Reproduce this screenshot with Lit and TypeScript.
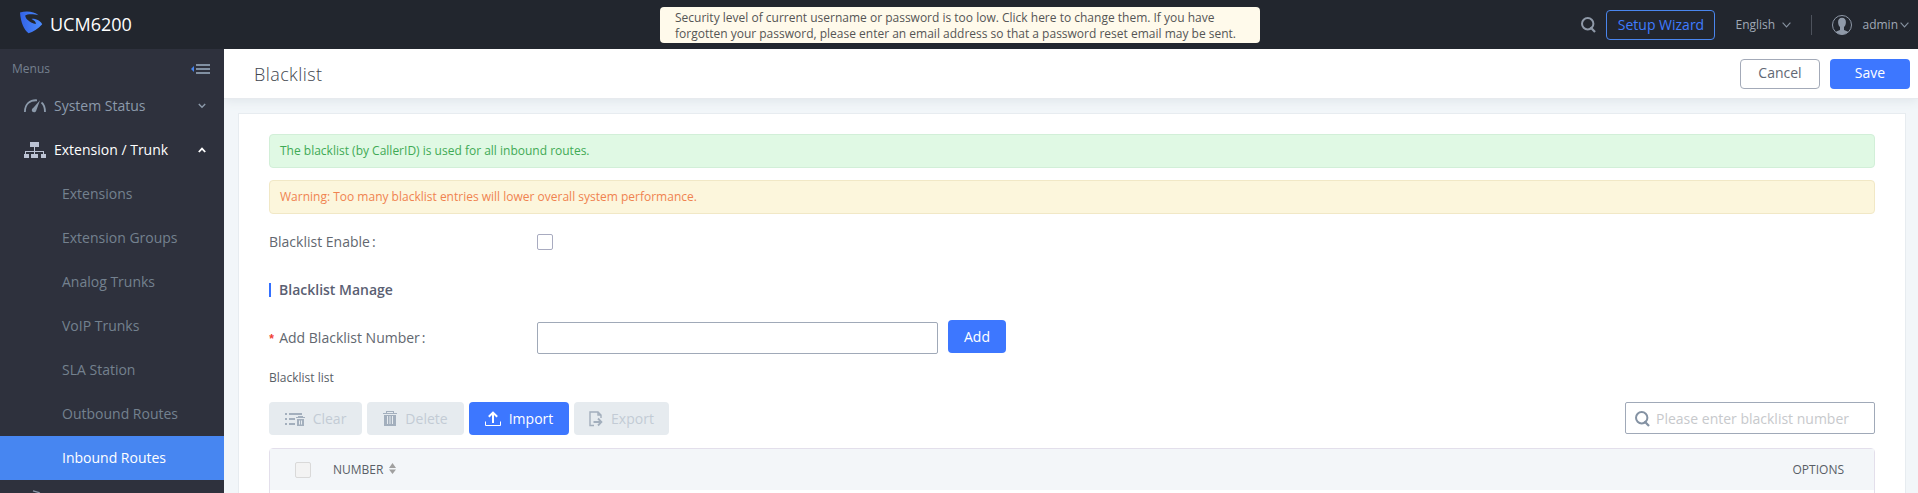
import { LitElement, html, css, svg } from "lit";
import { customElement } from "lit/decorators.js";

const searchIcon = svg`<svg width="15" height="16" viewBox="0 0 15 16" fill="none" stroke="currentColor"><circle cx="6.7" cy="6.7" r="5.7" stroke-width="2"/><path d="M9.4 10.2L14 15" stroke-width="2.2"/></svg>`;
const chevron = svg`<svg width="9" height="6" viewBox="0 0 9 6" fill="none" stroke="currentColor" stroke-width="1.1"><path d="M.6 .6L4.5 4.9L8.4 .6"/></svg>`;

@customElement("app-root")
export class AppRoot extends LitElement {
  static styles = css`
    :host { display: block; height: 493px; overflow: hidden; font: 14px/20px "Open Sans", sans-serif; color: #595e66; background: #f2f6f9; }
    * { box-sizing: border-box; }
    svg { display: block; flex: none; }
    .top { height: 49px; background: #22262e; display: flex; align-items: center; justify-content: space-between; color: #a0a9b6; position: relative; }
    .brand { display: flex; align-items: center; padding: 0 0 5px 20px; gap: 7px; color: #fff; font-size: 18px; }
    .brand span { padding-top: 3px; }
    .notice { position: absolute; left: 660px; top: 7px; width: 600px; height: 36px; border-radius: 4px; background: #fffaeb; color: #555; font-size: 12px; line-height: 16px; padding: 3px 0 0 15px; white-space: nowrap; }
    .notice div { width: max-content; }
    .tools { display: flex; align-items: center; padding-right: 9px; height: 46px; font-size: 12px; }
    .tools > svg:first-child { color: #8f99a8; }
    .wizard { width: 109px; height: 30px; border: 1px solid #4a86ee; border-radius: 4px; color: #3f7cff; font-size: 14px; line-height: 27px; text-align: center; margin: 0 20px 0 10px; }
    .lang { display: flex; align-items: center; gap: 7px; width: 76px; }
    .sep { width: 1px; height: 20px; background: #4d525c; margin-right: 20px; }
    .admin { display: flex; align-items: center; gap: 2px; margin-left: 10px; }
    .lang svg, .admin svg { color: #8792a0; }
    .body { display: flex; height: 444px; }
    .side { width: 224px; background: #2e313d; color: #8190a2; overflow: hidden; flex: none; }
    .menus { height: 35px; display: flex; align-items: center; justify-content: space-between; padding: 5px 14px 0 12px; font-size: 12px; color: #75808f; }
    .row { height: 44px; display: flex; align-items: center; padding: 0 18px 0 24px; color: #8c9aab; }
    .row span { flex: 1; padding-left: 8px; }
    .row.on { color: #fff; }
    .row.on .ic { color: #bcc3d4; }
    .sub { height: 44px; line-height: 44px; padding-left: 62px; color: #74818f; }
    .sub.on { background: #4786f1; color: #fff; }
    .main { flex: 1; min-width: 0; overflow: hidden; }
    .title { height: 50px; background: #fff; border-bottom: 1px solid #e7eaee; box-shadow: 0 2px 10px #dfe5ea; display: flex; align-items: center; padding: 1px 8px 0 30px; gap: 10px; }
    .title h1 { flex: 1; margin: 0; font-size: 18px; font-weight: 300; line-height: 24px; letter-spacing: .42px; color: #41464e; }
    .btn { height: 33px; border-radius: 4px; display: flex; align-items: center; justify-content: center; background: #3d77ff; color: #fff; }
    .title .btn { width: 80px; height: 30px; margin-top: -1px; padding-bottom: 1px; }
    .title .cancel { background: #fff; border: 1px solid #a3aab8; color: #626774; }
    .card { margin: 14px 12px 0 14px; height: 400px; background: #fff; border: 1px solid #e7ecf0; padding: 20px 30px 0; }
    .alert { height: 34px; border: 1px solid #d2efd8; border-radius: 4px; background: #e0f9e4; color: #3faa55; font-size: 12px; line-height: 32px; padding-left: 10px; margin-bottom: 12px; }
    .warn { background: #fcf6dc; border-color: #f1e8c6; color: #f08350; }
    .field { display: flex; align-items: center; }
    .label { width: 268px; color: #62676f; }
    .colon { padding-left: 2px; }
    .enable { height: 32px; }
    .box { width: 16px; height: 16px; border: 1px solid #a8abc0; border-radius: 2px; background: #fff; }
    .manage { display: flex; align-items: center; height: 20px; margin-top: 22px; gap: 8px; font-weight: 600; color: #5a6072; }
    .manage::before { content: ""; width: 2px; height: 14px; background: #3370ff; }
    .number { margin-top: 20px; height: 34px; }
    .number .label { padding-top: 2px; }
    .star { color: #f04134; font: 700 12px/14px "Liberation Mono", monospace; margin-right: 4px; margin-left: -1px; }
    .input { width: 401px; height: 32px; border: 1px solid #a0a9b8; border-radius: 2px; }
    .number .input { margin-top: 2px; }
    .number .btn { width: 58px; margin: 0 0 1px 10px; }
    .list { height: 20px; margin-top: 14px; font-size: 12px; }
    .bar { display: flex; gap: 5px; height: 33px; margin-top: 14px; }
    .bar .btn { gap: 8px; }
    .bar .off { background: #e6ebef; color: #c3cbd5; }
    .off svg { color: #a3afbd; }
    .clear { width: 93px; } .delete { width: 97px; } .import { width: 100px; } .export { width: 95px; }
    .search { margin-left: auto; width: 250px; display: flex; align-items: center; padding: 1px 0 0 9px; gap: 6px; color: #c7c9cc; }
    .search svg { color: #8492a3; }
    .table { margin-top: 13px; border: 1px solid #e3dfeb; border-radius: 4px 4px 0 0; height: 80px; font-size: 12px; }
    .thead { display: flex; align-items: center; height: 41px; background: #f3f6f9; padding: 0 30px 0 25px; }
    .thead .box { background: #f3f3f3; border-color: #d9d9d9; margin-right: 22px; margin-top: 1px; }
    .opts { margin-left: auto; }
    .sort { margin: -3px 0 0 6px; }
  `;

  render() {
    return html`
      <header class="top">
        <div class="brand">
          <svg width="23" height="23" viewBox="0 0 23 23"><defs><linearGradient id="g"><stop stop-color="#3262e6"/><stop offset="1" stop-color="#4c8dff"/></linearGradient></defs>
            <path fill="url(#g)" d="M0 1.5C6-.4 14 .2 18.5 4.2C14 3 7.5 2.8 5.2 4.4C5.4 8 10 11.5 15.8 13C16 11 15 9.6 11.6 7.9C15 7.6 20 9.4 22.2 13.2C18 18 13 21 8.5 22.3C4 19 .6 11 0 1.5Z"/></svg>
          <span>UCM6200</span>
        </div>
        <div class="notice"><div>Security level of current username or password is too low. Click here to change them. If you have</div><div>forgotten your password, please enter an email address so that a password reset email may be sent.</div></div>
        <div class="tools">
          ${searchIcon}
          <div class="wizard">Setup Wizard</div>
          <div class="lang"><span>English</span>${chevron}</div>
          <div class="sep"></div>
          <svg width="20" height="20" viewBox="0 0 20 20"><circle cx="10" cy="10" r="9.5" fill="none" stroke="#8f99a8"/><path fill="#8f99a8" d="M10 2.7C7.3 2.7 6 4.5 6.1 7.2C6.1 9.5 7 11 8 12V15C6.4 16 4.5 16.2 3.7 17.1C7 20.2 13 20.2 16.3 17.1C15.5 16.2 13.6 16 12 15V12C13 11 13.9 9.5 13.9 7.2C14 4.5 12.7 2.7 10 2.7Z"/></svg>
          <div class="admin"><span>admin</span>${chevron}</div>
        </div>
      </header>
      <div class="body">
        <nav class="side">
          <div class="menus"><span>Menus</span><svg width="19" height="10" viewBox="0 0 19 10"><path fill="#4786f1" d="M0 5L3 2V8Z"/><path fill="#8190a2" d="M5 0H19V2H5ZM5 4H19V6H5ZM5 8H19V10H5Z"/></svg></div>
          <div class="row"><svg width="22" height="14" viewBox="0 0 22 14" fill="none" stroke="currentColor" stroke-width="1.8"><path d="M.9 13C.9 5 6 .8 13 1.3M17.5 3.5C20 5.5 21 9 21 13"/><path fill="currentColor" stroke="none" d="M16 1.2L12.2 11.7C11.4 14 7.8 13.6 7.8 11.3C7.8 10 9 9.2 9.6 8.6Z"/></svg><span>System Status</span><svg width="8" height="6" viewBox="0 0 8 6" fill="none" stroke="currentColor" stroke-width="1.4"><path d="M.8 1L4 4.3L7.2 1"/></svg></div>
          <div class="row on"><svg class="ic" width="22" height="16" viewBox="0 0 22 16" fill="currentColor"><path d="M6 0H15V5H6ZM10 5H11V9H20V12H19V10H11V12H10V10H2V12H1V9H10ZM0 12H5V16H0ZM7 12H14V16H7ZM17 12H22V16H17Z"/></svg><span>Extension / Trunk</span><svg width="8" height="6" viewBox="0 0 8 6" fill="none" stroke="currentColor" stroke-width="1.8"><path d="M.8 5L4 1.6L7.2 5"/></svg></div>
          ${["Extensions", "Extension Groups", "Analog Trunks", "VoIP Trunks", "SLA Station", "Outbound Routes"].map((t) => html`<div class="sub">${t}</div>`)}
          <div class="sub on">Inbound Routes</div>
          <div class="row"><svg width="22" height="24" viewBox="0 0 22 24" fill="none" stroke="currentColor" stroke-width="1.3"><path d="M9 .8L15 2.6L21 9"/></svg></div>
        </nav>
        <main class="main">
          <div class="title"><h1>Blacklist</h1><div class="btn cancel">Cancel</div><div class="btn">Save</div></div>
          <section class="card">
            <div class="alert">The blacklist (by CallerID) is used for all inbound routes.</div>
            <div class="alert warn">Warning: Too many blacklist entries will lower overall system performance.</div>
            <div class="field enable"><div class="label">Blacklist Enable<span class="colon">:</span></div><div class="box"></div></div>
            <div class="manage">Blacklist Manage</div>
            <div class="field number"><div class="label"><span class="star">*</span>Add Blacklist Number<span class="colon">:</span></div><div class="input"></div><div class="btn">Add</div></div>
            <div class="list">Blacklist list</div>
            <div class="bar">
              <div class="btn off clear"><svg width="20" height="14" viewBox="0 0 20 14" fill="currentColor"><path d="M0 1H2V3H0ZM4 1H17V3H4ZM0 6H2V8H0ZM4 6H10V8H4ZM0 11H2V13H0ZM4 11H10V13H4ZM11 5H13V4H18V5H20V6H11Z"/><path fill-rule="evenodd" d="M12 7H19V14H12ZM14 8.5V12.5H15V8.5ZM16 8.5V12.5H17V8.5Z"/></svg>Clear</div>
              <div class="btn off delete"><svg width="14" height="16" viewBox="0 0 14 16" fill="currentColor"><path d="M3 0H11V2H14V3H0V2H3ZM4 1V2H10V1Z" fill-rule="evenodd"/><path fill-rule="evenodd" d="M1 4H13V15H1ZM4 5V13H5V5ZM6.5 5V13H7.5V5ZM9 5V13H10V5Z"/></svg>Delete</div>
              <div class="btn import"><svg width="16" height="15" viewBox="0 0 16 15" fill="none" stroke="currentColor"><path d="M.5 10.5V14.5H15.5V10.5"/><path stroke-width="2" d="M8 12V2M3.8 5.8L8 1.6L12.2 5.8"/></svg>Import</div>
              <div class="btn off export"><svg width="14" height="16" viewBox="0 0 14 16" fill="none" stroke="currentColor" stroke-width="1.4"><path d="M5 14.5H1V1H9L12 4V7M9 1V4H12"/><path stroke-width="1.8" d="M4.5 11H12M9 7.5L12.4 11L9 14.5"/></svg>Export</div>
              <div class="input search">${searchIcon}<span>Please enter blacklist number</span></div>
            </div>
            <div class="table"><div class="thead"><div class="box"></div><span>NUMBER</span><svg class="sort" width="7" height="11" viewBox="0 0 7 11" fill="#a0a0a0"><path d="M0 5L3.5 0L7 5ZM0 6.5H7L3.5 11Z"/></svg><span class="opts">OPTIONS</span></div></div>
          </section>
        </main>
      </div>`;
  }
}
